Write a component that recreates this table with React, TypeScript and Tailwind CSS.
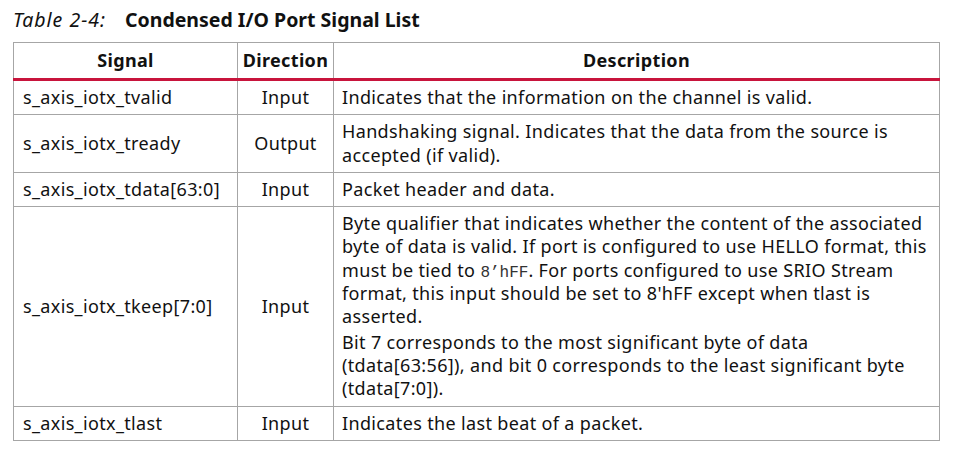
const rows = [
  {
    signal: "s_axis_iotx_tvalid",
    dir: "Input",
    desc: [<>Indicates that the information on the channel is valid.</>],
  },
  {
    signal: "s_axis_iotx_tready",
    dir: "Output",
    desc: [<>Handshaking signal. Indicates that the data from the source is accepted (if valid).</>],
  },
  {
    signal: "s_axis_iotx_tdata[63:0]",
    dir: "Input",
    desc: [<>Packet header and data.</>],
  },
  {
    signal: "s_axis_iotx_tkeep[7:0]",
    dir: "Input",
    desc: [
      <>
        Byte qualifier that indicates whether the content of the associated byte of data is
        valid. If port is configured to use HELLO format, this must be tied to{" "}
        <span className="font-['Liberation_Mono',monospace] text-[16px] leading-none tracking-normal text-[#333]">
          8’hFF
        </span>
        . For ports configured to use SRIO Stream format, this input should be set to 8'hFF
        except when tlast is asserted.
      </>,
      <>
        Bit 7 corresponds to the most significant byte of data
        <br />
        (tdata[63:56]), and bit 0 corresponds to the least significant byte (tdata[7:0]).
      </>,
    ],
  },
  {
    signal: "s_axis_iotx_tlast",
    dir: "Input",
    desc: [<>Indicates the last beat of a packet.</>],
  },
]

export default function App() {
  return (
    <div className="h-[458px] w-[960px] bg-white font-['Noto_Sans',sans-serif] text-[18px] leading-[23.3px] tracking-[0.35px] text-[#111]">
      <div className="flex items-baseline pl-[13px] pt-[6px] leading-[28px] tracking-normal">
        <span className="text-[19.5px] italic tracking-[1px]">Table 2-4:</span>
        <span className="ml-[19px] text-[19.5px] font-bold">Condensed I/O Port Signal List</span>
      </div>
      <table className="ml-[13px] mt-[8px] w-[927px] table-fixed border-collapse">
        <colgroup>
          <col className="w-[224px]" />
          <col className="w-[96px]" />
          <col />
        </colgroup>
        <thead>
          <tr className="h-[37px]">
            {["Signal", "Direction", "Description"].map((h) => (
              <th
                key={h}
                className="border border-[#a6a6a6] border-b-[3px] border-b-[#c8143c] p-0 text-center align-middle font-bold"
              >
                {h}
              </th>
            ))}
          </tr>
        </thead>
        <tbody>
          {rows.map((r) => (
            <tr key={r.signal}>
              <td className="border border-[#a6a6a6] px-[9px] py-[5px] align-middle">{r.signal}</td>
              <td className="border border-[#a6a6a6] px-[2px] py-[5px] text-center align-middle">{r.dir}</td>
              <td className="border border-[#a6a6a6] px-[8px] py-[5px] align-middle">
                <div className="flex flex-col gap-[2px]">
                  {r.desc.map((d, i) => (
                    <p key={i}>{d}</p>
                  ))}
                </div>
              </td>
            </tr>
          ))}
        </tbody>
      </table>
    </div>
  )
}
